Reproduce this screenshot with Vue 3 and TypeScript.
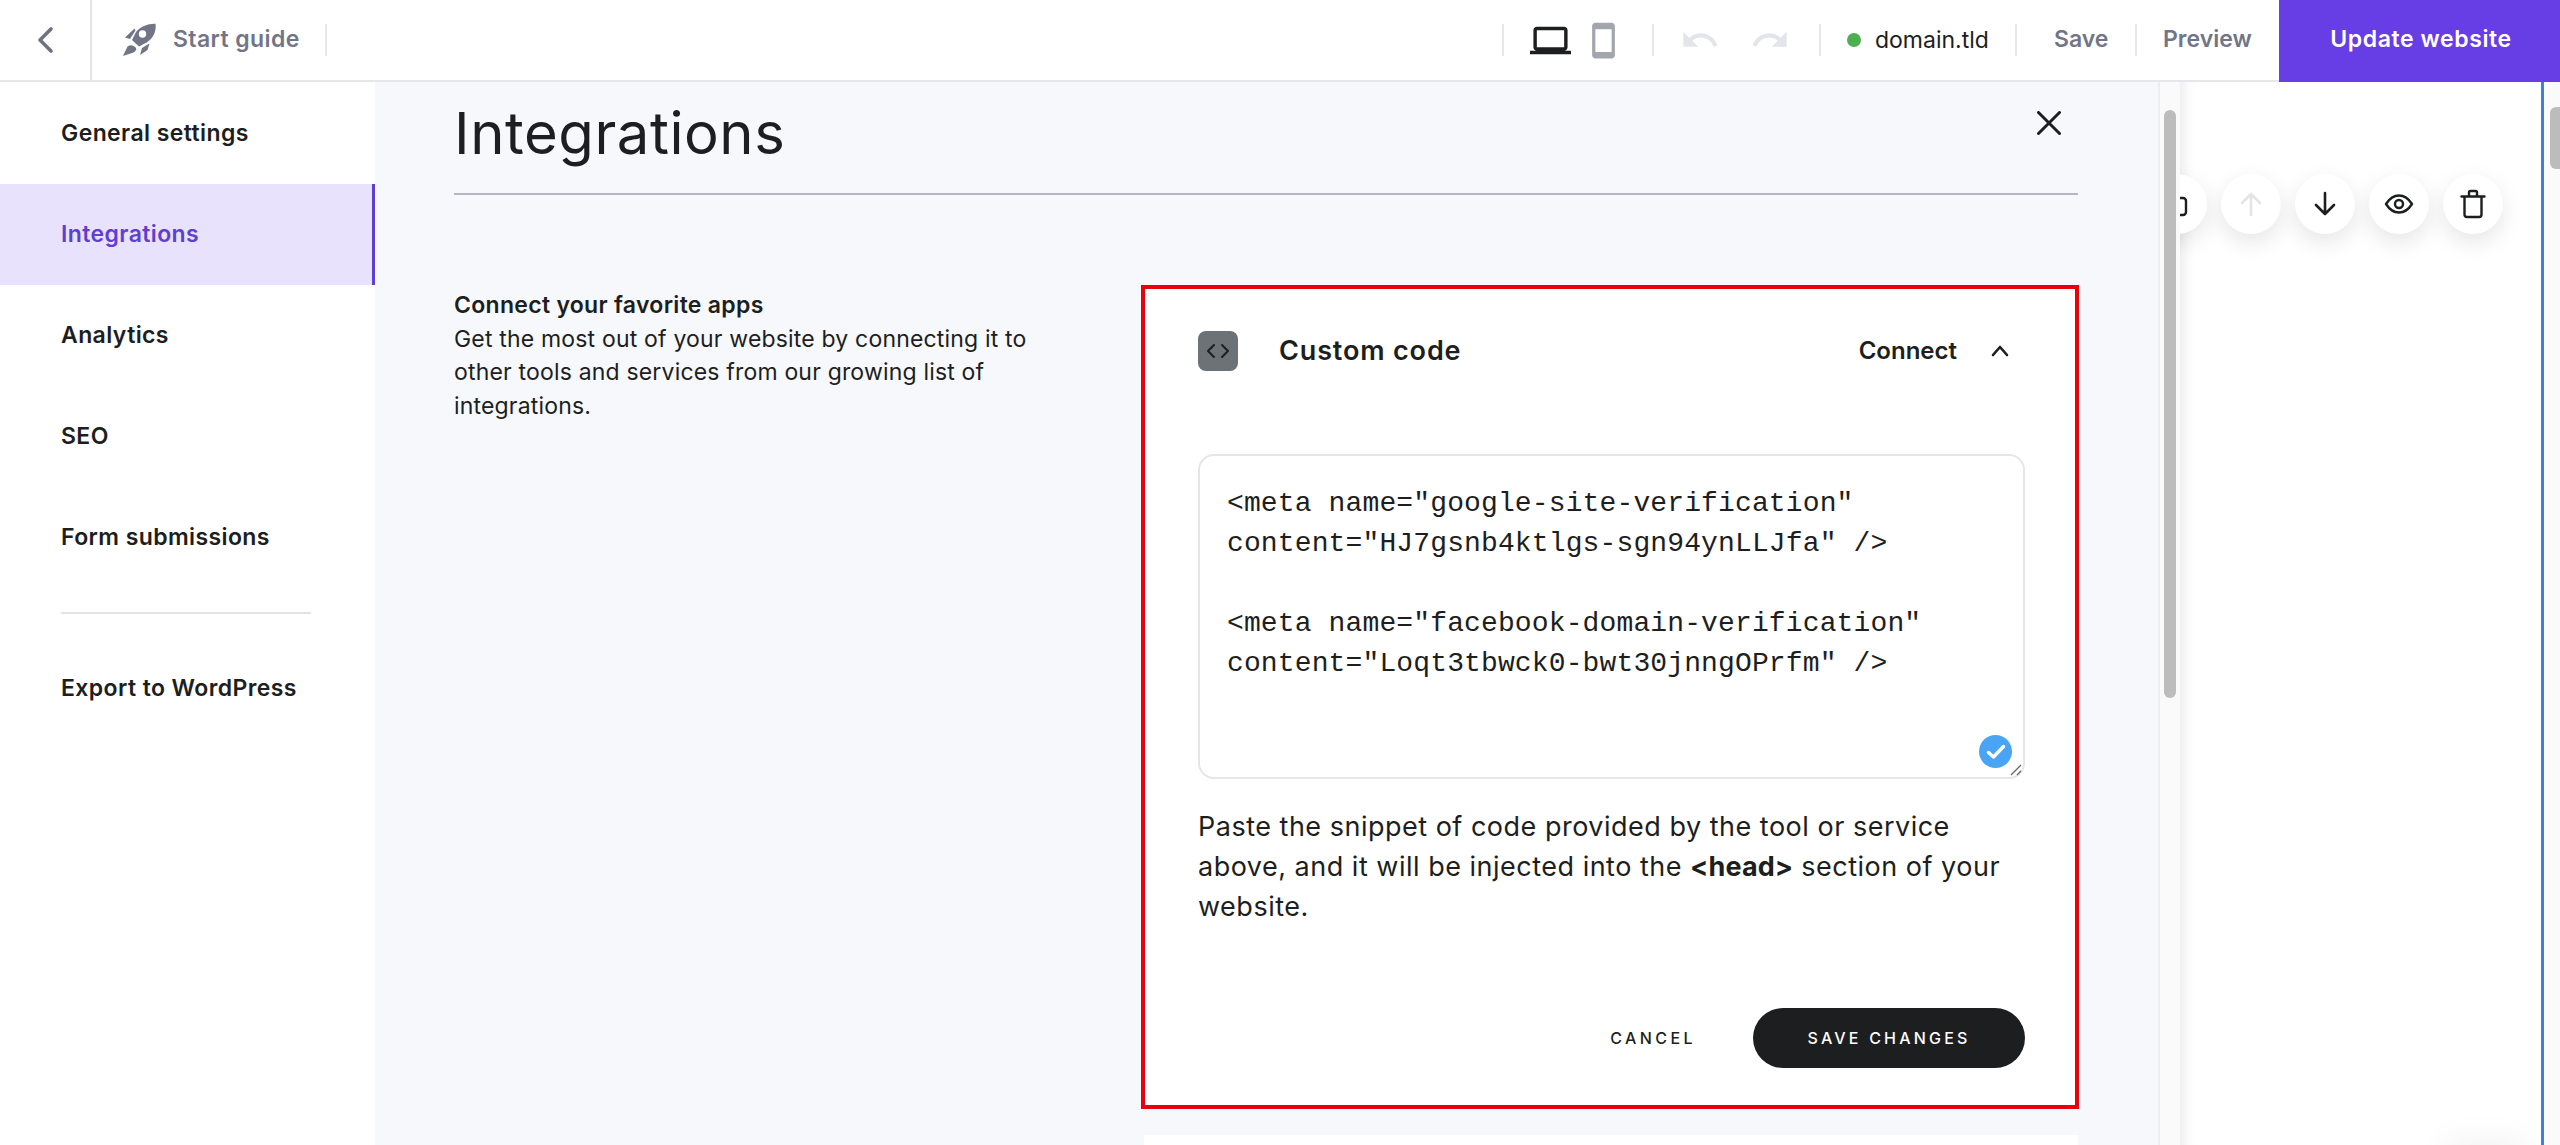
<script setup lang="ts">
const menu: { label: string; active?: boolean }[] = [
  { label: 'General settings' },
  { label: 'Integrations', active: true },
  { label: 'Analytics' },
  { label: 'SEO' },
  { label: 'Form submissions' },
]
const codeLines: string[] = [
  '<meta name="google-site-verification"',
  'content="HJ7gsnb4ktlgs-sgn94ynLLJfa" />',
  '',
  '<meta name="facebook-domain-verification"',
  'content="Loqt3tbwck0-bwt30jnngOPrfm" />',
]
</script>

<template>
  <div class="app">
    <header class="topbar">
      <button class="back" aria-label="Back">
        <svg width="18" height="28" viewBox="0 0 18 28"><path d="M15 3 4 14l11 11" fill="none" stroke="#70717f" stroke-width="3.6" stroke-linecap="round" stroke-linejoin="round" /></svg>
      </button>
      <div class="guide">
        <svg class="rocket" width="34" height="34" viewBox="0 0 34 34">
          <path fill="#727586" d="M33.5.8C25.5.6 18.5 3.6 14 9l-4 8 7 6.500 8-4.200C31 15 34.500 8.800 33.500.8z" />
          <circle cx="20.500" cy="11" r="3.700" fill="#fff" />
          <path fill="#727586" d="M12.500 5.500 3 14.500l5 1.500 5.500-8.500zM5.500 23.500c3-2.300 6-1.500 8.500 1.500 1 1.500-.5 3-2.500 4.500L1 33zM18 32l2-7 7.500-4.500-2 6.500z" />
        </svg>
        <span class="guide-text">Start guide</span>
      </div>
      <div class="spacer"></div>
      <div class="seg seg-devices">
        <svg width="41" height="41" viewBox="0 0 24 24"><path fill="#1d1e20" d="M20 18c1.100 0 1.990-.9 1.990-2L22 6c0-1.100-.9-2-2-2H4c-1.100 0-2 .9-2 2v10c0 1.100.9 2 2 2H0v2h24v-2h-4zM4 6h16v10H4V6z" /></svg>
        <svg width="39" height="39" viewBox="0 0 24 24"><path fill="#a3a6ac" d="M17 1.010 7 1c-1.100 0-2 .9-2 2v18c0 1.100.9 2 2 2h10c1.100 0 2-.9 2-2V3c0-1.100-.9-1.990-2-1.990zM17 19H7V5h10v14z" /></svg>
      </div>
      <div class="seg seg-history">
        <svg width="40" height="40" viewBox="0 0 24 24"><path fill="#e3e5ea" d="M12.500 8c-2.650 0-5.050.99-6.900 2.600L2 7v9h9l-3.620-3.620c1.390-1.160 3.160-1.880 5.120-1.880 3.540 0 6.550 2.310 7.600 5.500l2.370-.78C21.080 11.030 17.150 8 12.500 8z" /></svg>
        <svg width="40" height="40" viewBox="0 0 24 24"><path fill="#e3e5ea" d="M18.400 10.600C16.550 8.990 14.150 8 11.500 8c-4.650 0-8.580 3.030-9.960 7.220L3.900 16c1.050-3.190 4.050-5.500 7.600-5.500 1.950 0 3.730.72 5.120 1.880L13 16h9V7l-3.600 3.600z" /></svg>
      </div>
      <div class="seg seg-domain">
        <span class="dot"></span>
        <span class="domain">domain.tld</span>
      </div>
      <div class="seg seg-save"><span class="tool-text">Save</span></div>
      <div class="seg seg-preview"><span class="tool-text">Preview</span></div>
      <button class="update">Update website</button>
    </header>

    <div class="body">
      <nav class="sidebar">
        <a v-for="item in menu" :key="item.label" class="nav-item" :class="{ active: item.active }">{{ item.label }}</a>
        <div class="nav-rule"></div>
        <a class="nav-item">Export to WordPress</a>
      </nav>

      <main class="main">
        <div class="main-head">
          <h1 class="title">Integrations</h1>
          <svg class="close" width="24" height="24" viewBox="0 0 24 24"><path d="M1.500 1.500l21 21M22.500 1.500l-21 21" fill="none" stroke="#1d1e20" stroke-width="3" stroke-linecap="round" /></svg>
        </div>
        <div class="content">
          <div class="intro">
            <div class="intro-title">Connect your favorite apps</div>
            <p class="intro-text">Get the most out of your website by connecting it to other tools and services from our growing list of integrations.</p>
          </div>
          <div class="cards">
            <section class="card">
              <div class="card-head">
                <span class="code-icon">
                  <svg width="24" height="16" viewBox="0 0 24 16"><path d="M8 2 2 8l6 6M16 2l6 6-6 6" fill="none" stroke="#1d1e20" stroke-width="2" stroke-linecap="round" stroke-linejoin="round" /></svg>
                </span>
                <span class="card-title">Custom code</span>
                <span class="connect">Connect</span>
                <svg class="chev" width="18" height="12" viewBox="0 0 18 12"><path d="M2 10l7-8 7 8" fill="none" stroke="#1d1e20" stroke-width="2.600" stroke-linecap="round" stroke-linejoin="round" /></svg>
              </div>
              <div class="code-box">
                <div v-for="(line, i) in codeLines" :key="i" class="code-line">{{ line }}</div>
                <span class="valid">
                  <svg width="20" height="16" viewBox="0 0 20 16"><path d="M2.500 8.500 7.500 13 17.500 2.500" fill="none" stroke="#fff" stroke-width="3.400" stroke-linecap="round" stroke-linejoin="round" /></svg>
                </span>
                <svg class="grip" width="12" height="12" viewBox="0 0 12 12"><path d="M1 11 11 1M7 11l4-4" stroke="#6b6b6b" stroke-width="1.400" fill="none" /></svg>
              </div>
              <p class="hint">Paste the snippet of code provided by the tool or service above, and it will be injected into the <b>&lt;head&gt;</b> section of your website.</p>
              <div class="actions">
                <button class="cancel">CANCEL</button>
                <button class="save-btn">SAVE CHANGES</button>
              </div>
            </section>
            <section class="card-next"></section>
          </div>
        </div>
      </main>

      <div class="gutter"><div class="gutter-thumb"></div></div>

      <div class="preview">
        <div class="tools">
          <span class="round">
            <svg width="24" height="28" viewBox="0 0 24 28"><path d="M13 2v5" stroke="#1d1e20" stroke-width="2" fill="none" /><rect x="3" y="8" width="18" height="17" rx="3" fill="none" stroke="#1d1e20" stroke-width="2.400" /></svg>
          </span>
          <span class="round">
            <svg width="28" height="28" viewBox="0 0 28 28"><path d="M14 25V4M5 13l9-9 9 9" fill="none" stroke="#e4e4e6" stroke-width="2.600" stroke-linecap="round" stroke-linejoin="round" /></svg>
          </span>
          <span class="round">
            <svg width="28" height="28" viewBox="0 0 28 28"><path d="M14 3v21M5 15l9 9 9-9" fill="none" stroke="#1d1e20" stroke-width="2.600" stroke-linecap="round" stroke-linejoin="round" /></svg>
          </span>
          <span class="round">
            <svg width="30" height="30" viewBox="0 0 30 30"><path d="M2 15c3.500-5.500 8-8.500 13-8.500S24.500 9.500 28 15c-3.500 5.500-8 8.500-13 8.500S5.500 20.500 2 15z" fill="none" stroke="#1d1e20" stroke-width="2.400" stroke-linejoin="round" /><circle cx="15" cy="15" r="4" fill="none" stroke="#1d1e20" stroke-width="2.400" /></svg>
          </span>
          <span class="round">
            <svg width="26" height="30" viewBox="0 0 26 30"><path d="M1.500 7.500h23M9 7V3.500C9 2.500 9.800 2 10.500 2h5c.8 0 1.500.5 1.500 1.500V7M4.500 8v17.500C4.500 27 5.500 28 7 28h12c1.500 0 2.500-1 2.500-2.500V8" fill="none" stroke="#1d1e20" stroke-width="2.400" stroke-linecap="round" stroke-linejoin="round" /></svg>
          </span>
        </div>
        <span class="ghost"></span>
      </div>
      <div class="page-edge"><div class="page-thumb"></div></div>
    </div>
  </div>
</template>

<style scoped>
.app {
  width: 2560px;
  height: 1145px;
  display: flex;
  flex-direction: column;
  overflow: hidden;
  background: #fff;
  font-family: Inter, "Liberation Sans", sans-serif;
  color: #1d1e20;
}
.topbar {
  height: 80px;
  flex: none;
  display: flex;
  align-items: center;
  border-bottom: 2px solid #e6e7ea;
  box-sizing: content-box;
}
.back {
  width: 92px;
  height: 80px;
  flex: none;
  border: 0;
  border-right: 2px solid #e3e3e6;
  background: none;
  padding: 0;
  display: flex;
  align-items: center;
  justify-content: center;
}
.guide {
  width: 235px;
  height: 32px;
  flex: none;
  display: flex;
  align-items: center;
  gap: 17px;
  padding-left: 30px;
  box-sizing: border-box;
  border-right: 2px solid #e6e7ea;
}
.guide-text {
  font-size: 23px;
  font-weight: 600;
  letter-spacing: 0.4px;
  color: #727586;
  white-space: nowrap;
  padding-bottom: 2px;
}
.spacer {
  flex: 1;
}
.seg {
  height: 32px;
  flex: none;
  display: flex;
  align-items: center;
  box-sizing: border-box;
  border-left: 2px solid #e6e7ea;
}
.seg-devices {
  width: 150px;
  justify-content: center;
  gap: 13px;
  padding-right: 3px;
}
.seg-history {
  width: 167px;
  justify-content: center;
  gap: 30px;
  padding-right: 3px;
}
.seg-domain {
  width: 196px;
  padding-left: 26px;
  gap: 14px;
}
.seg-save {
  width: 120px;
  padding-left: 37px;
}
.seg-preview {
  width: 144px;
  padding-left: 26px;
}
.dot {
  width: 14px;
  height: 14px;
  border-radius: 50%;
  background: #4caf50;
}
.domain {
  font-size: 23px;
  white-space: nowrap;
  color: #1d1e20;
  padding-bottom: 1px;
}
.tool-text {
  font-size: 23px;
  font-weight: 600;
  color: #727586;
  padding-bottom: 2px;
}
.update {
  width: 281px;
  height: 82px;
  margin-bottom: -2px;
  flex: none;
  border: 0;
  background: #673de6;
  color: #fff;
  font: 600 23px Inter, "Liberation Sans", sans-serif;
  letter-spacing: 0.6px;
  padding: 0 0 4px 3px;
}
.body {
  flex: 1;
  min-height: 0;
  display: flex;
}
.sidebar {
  width: 375px;
  flex: none;
  padding-top: 1px;
  box-sizing: border-box;
  display: flex;
  flex-direction: column;
}
.nav-item {
  height: 101px;
  flex: none;
  display: flex;
  align-items: center;
  padding: 0 0 2px 61px;
  box-sizing: border-box;
  font-size: 23px;
  font-weight: 600;
  letter-spacing: 0.4px;
  color: #1d1e20;
}
.nav-item.active {
  background: #e9e2fd;
  color: #5e3fd1;
  border-right: 3px solid #5e3fd1;
}
.nav-rule {
  width: 250px;
  height: 2px;
  margin: 24px 0 24px 61px;
  background: #e3e3e6;
  flex: none;
}
.main {
  flex: none;
  width: 1783px;
  box-sizing: border-box;
  background: #f6f8fc;
  padding: 15px 80px 0 79px;
  overflow: hidden;
}
.main-head {
  height: 96px;
  display: flex;
  align-items: flex-start;
  justify-content: space-between;
  border-bottom: 2px solid #b4b6c2;
}
.title {
  margin: 0;
  font-size: 58px;
  line-height: 72px;
  font-weight: 400;
  letter-spacing: 0.55px;
  color: #1d1e20;
}
.close {
  margin: 14px 17px 0 0;
}
.content {
  margin-top: 90px;
  display: grid;
  grid-template-columns: 687px 938px;
}
.intro {
  padding-top: 4px;
  width: 590px;
  font-size: 23px;
  line-height: 33.500px;
}
.intro-title {
  font-weight: 600;
  letter-spacing: 0.3px;
}
.intro-text {
  margin: 0;
  letter-spacing: 0.18px;
}
.card {
  border: 4px solid #e8000b;
  background: #fff;
  padding: 42px 50px 37px 53px;
}
.card-head {
  display: flex;
  align-items: center;
  height: 40px;
}
.code-icon {
  width: 40px;
  height: 40px;
  border-radius: 8px;
  background: #6d7277;
  display: flex;
  align-items: center;
  justify-content: center;
}
.card-title {
  margin-left: 41px;
  flex: 1;
  font-size: 27px;
  font-weight: 600;
  letter-spacing: 0.85px;
  padding-bottom: 2px;
}
.connect {
  font-size: 24px;
  font-weight: 600;
  padding-bottom: 2px;
}
.chev {
  margin: 0 16px 0 34px;
}
.code-box {
  position: relative;
  height: 325px;
  margin-top: 83px;
  padding: 28px 27px 0;
  box-sizing: border-box;
  border: 2px solid #e6e6e8;
  border-radius: 16px;
  font-family: "Liberation Mono", monospace;
  font-size: 28px;
  letter-spacing: 0.13px;
  line-height: 40px;
  color: #1d1e20;
}
.code-line {
  height: 40px;
  white-space: pre;
}
.valid {
  position: absolute;
  right: 11px;
  bottom: 9px;
  width: 33px;
  height: 33px;
  border-radius: 50%;
  background: #4aa4f6;
  display: flex;
  align-items: center;
  justify-content: center;
}
.grip {
  position: absolute;
  right: 1px;
  bottom: 1px;
}
.hint {
  margin: 28px 0 0;
  font-size: 27px;
  letter-spacing: 0.5px;
  line-height: 40px;
}
.hint b {
  font-weight: 700;
  letter-spacing: 0.1px;
}
.actions {
  margin-top: 81px;
  display: flex;
  justify-content: flex-end;
  align-items: center;
  gap: 57px;
}
.cancel {
  border: 0;
  background: none;
  padding: 0;
  font: 500 16px Inter, "Liberation Sans", sans-serif;
  letter-spacing: 3.4px;
  color: #1d1e20;
}
.save-btn {
  width: 272px;
  height: 60px;
  border: 0;
  border-radius: 30px;
  background: #1d1e20;
  color: #fff;
  font: 500 16px Inter, "Liberation Sans", sans-serif;
  letter-spacing: 3.2px;
}
.card-next {
  margin: 26px 1px 0 3px;
  height: 200px;
  background: #fff;
}
.gutter {
  width: 22px;
  flex: none;
  box-sizing: border-box;
  background: #fafafa;
  border-left: 2px solid #eceef2;
  padding: 28px 0 0 4px;
}
.gutter-thumb {
  width: 12px;
  height: 588px;
  border-radius: 6px;
  background: #bcbcbc;
}
.preview {
  width: 364px;
  flex: none;
  box-sizing: border-box;
  border-right: 3px solid #3f7fe0;
  position: relative;
  overflow: hidden;
  background: #fff;
  box-shadow: inset 14px 0 14px -12px rgba(0, 0, 0, 0.1);
}
.tools {
  margin-top: 92px;
  padding: 0 38px 30px 0;
  display: flex;
  justify-content: flex-end;
  gap: 14px;
}
.round {
  width: 60px;
  height: 60px;
  flex: none;
  border-radius: 50%;
  background: #fff;
  box-shadow: 0 8px 22px rgba(0, 0, 0, 0.1);
  display: flex;
  align-items: center;
  justify-content: center;
}
.ghost {
  position: absolute;
  left: 265px;
  top: 1063px;
  width: 80px;
  height: 40px;
  background: #fff;
  box-shadow: 0 -6px 30px rgba(0, 0, 0, 0.05);
}
.page-edge {
  width: 16px;
  flex: none;
  background: #fafafa;
  padding: 25px 0 0 6px;
  box-sizing: border-box;
}
.page-thumb {
  height: 62px;
  border-radius: 6px 0 0 6px;
  background: #bcbcbc;
}
</style>
